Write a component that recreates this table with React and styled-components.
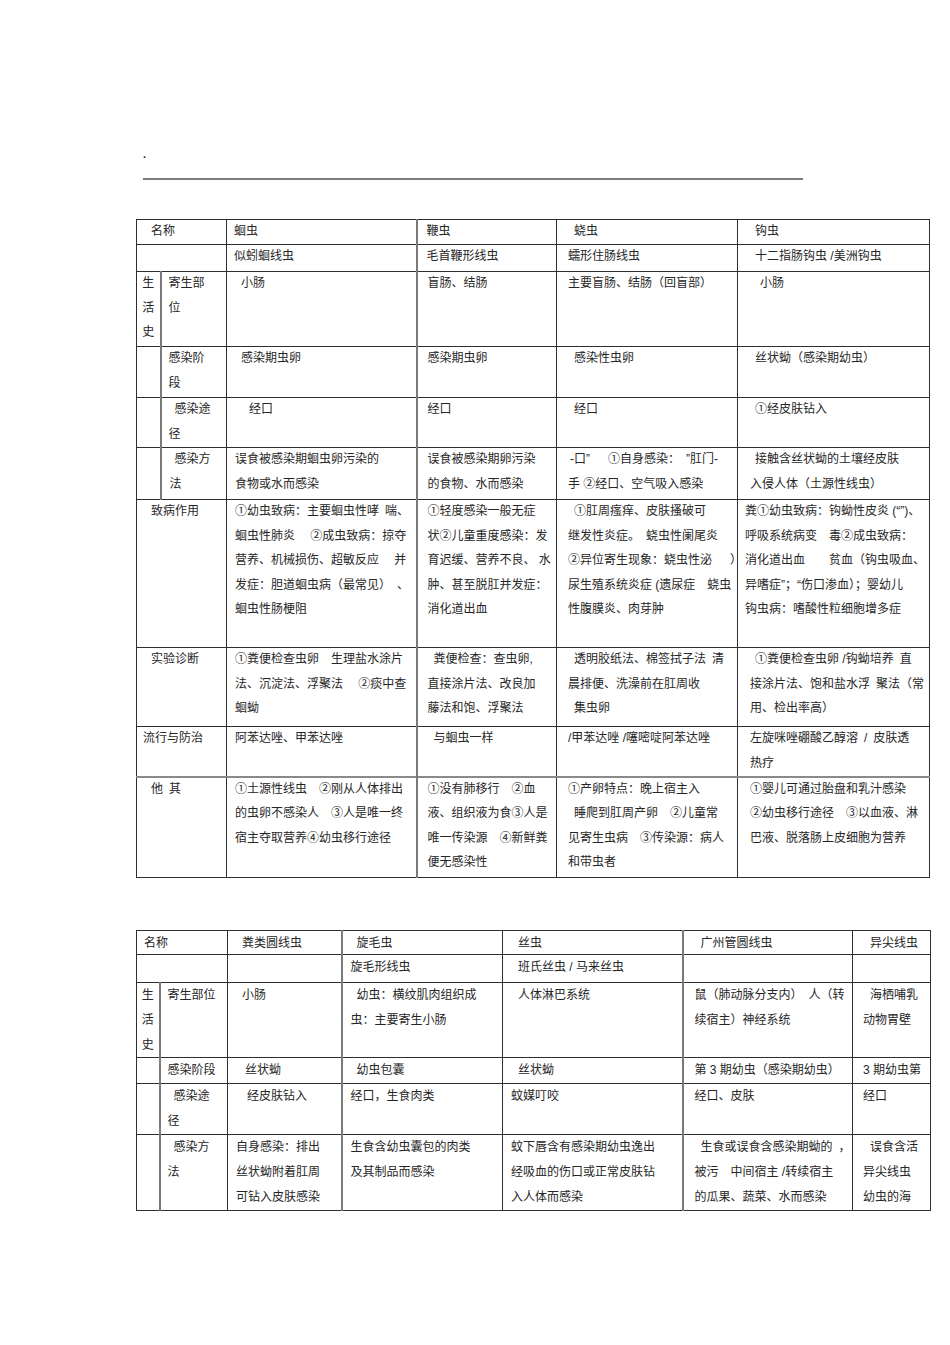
import React from 'react';
import styled, { createGlobalStyle, css } from 'styled-components';

const GlobalStyle = createGlobalStyle`
  html, body { margin: 0; padding: 0; background: #ffffff; }
  body {
    font-family: "Liberation Sans", "Noto Sans CJK SC", sans-serif;
    color: #262626;
  }
`;

const Page = styled.div`
  width: 950px;
  min-height: 1345px;
  box-sizing: border-box;
  padding: 148px 0 40px 136px;
`;

const DotMark = styled.div`
  margin-left: 7px;
  height: 12px;
  font-size: 11px;
  font-weight: 700;
  line-height: 12px;
  color: #222;
`;

const Rule = styled.div`
  margin: 18px 0 0 7px;
  width: 660px;
  height: 2px;
  background: #7d7d7d;
`;

const Sheet = styled.table`
  border-collapse: collapse;
  table-layout: fixed;
  width: ${p => p.$w}px;
  margin-top: ${p => p.$mt}px;
  font-size: 12px;
`;

const Col = styled.col`
  width: ${p => p.$w}px;
`;

const Row = styled.tr`
  height: ${p => p.$h}px;
`;

const Cell = styled.td`
  border: 1px solid #2e2e2e;
  ${p => p.$heavyLeft && css`border-left: 2px solid #7a7a7a;`}
  ${p => p.$heavyTop && css`border-top: 2px solid #8a8a8a;`}
  padding: 0;
  vertical-align: top;
  overflow: visible;
  text-align: ${p => (p.$center ? 'center' : 'left')};
`;

const Stack = styled.div`
  margin-top: ${p => p.$off}px;
  margin-bottom: -14px;
`;

const Line = styled.div`
  height: ${p => p.$lh}px;
  line-height: ${p => p.$lh}px;
  padding-left: ${p => p.$i}px;
  white-space: pre;
`;

const LIFE = [['生', 0], ['活', 0], ['史', 0]];

const T1 = {
  cols: [24, 66, 190, 140, 181, 192],
  heavy: [1, 3],
  lh: 24.6,
  off: -1,
  rows: [
    { h: 25, cells: [
      { span: 2, l: [['名称', 14]] },
      { l: [['蛔虫', 7]] },
      { l: [['鞭虫', 9]] },
      { l: [['蛲虫', 17]] },
      { l: [['钩虫', 17]] },
    ] },
    { h: 27, cells: [
      { span: 2, l: [] },
      { l: [['似蚓蛔线虫', 7]] },
      { l: [['毛首鞭形线虫', 9]] },
      { l: [['蠕形住肠线虫', 11]] },
      { l: [['十二指肠钩虫 /美洲钩虫', 17]] },
    ] },
    { h: 75, cells: [
      { l: LIFE, center: true },
      { l: [['寄生部', 7], ['位', 7]] },
      { l: [['小肠', 14]] },
      { l: [['盲肠、结肠', 10]] },
      { l: [['主要盲肠、结肠（回盲部）', 11]] },
      { l: [['小肠', 22]] },
    ] },
    { h: 51, cells: [
      { l: [] },
      { l: [['感染阶', 7], ['段', 7]] },
      { l: [['感染期虫卵', 14]] },
      { l: [['感染期虫卵', 10]] },
      { l: [['感染性虫卵', 17]] },
      { l: [['丝状蚴（感染期幼虫）', 17]] },
    ] },
    { h: 50, cells: [
      { l: [] },
      { l: [['感染途', 13], ['径', 7]] },
      { l: [['经口', 22]] },
      { l: [['经口', 10]] },
      { l: [['经口', 17]] },
      { l: [['①经皮肤钻入', 17]] },
    ] },
    { h: 52, cells: [
      { l: [] },
      { l: [['感染方', 13], ['法', 8]] },
      { l: [['误食被感染期蛔虫卵污染的', 8], ['食物或水而感染', 8]] },
      { l: [['误食被感染期卵污染', 10], ['的食物、水而感染', 10]] },
      { l: [['-口”\u3000\u2002①自身感染：\u2002”肛门-', 13], ['手 ②经口、空气吸入感染', 11]] },
      { l: [['接触含丝状蚴的土壤经皮肤', 17], ['入侵人体（土源性线虫）', 12]] },
    ] },
    { h: 148, cells: [
      { span: 2, l: [['致病作用', 14]] },
      { l: [
        ['①幼虫致病：主要蛔虫性哮\u2002喘、', 8],
        ['蛔虫性肺炎\u3000 ②成虫致病：掠夺', 8],
        ['营养、机械损伤、超敏反应\u3000 并', 8],
        ['发症：胆道蛔虫病（最常见）\u2002、', 8],
        ['蛔虫性肠梗阻', 8],
      ] },
      { l: [
        ['①轻度感染一般无症', 10],
        ['状②儿童重度感染：发', 10],
        ['育迟缓、营养不良、 水', 10],
        ['肿、甚至脱肛并发症：', 10],
        ['消化道出血', 10],
      ] },
      { l: [
        ['①肛周瘙痒、皮肤搔破可', 17],
        ['继发性炎症。\u3000蛲虫性阑尾炎', 11],
        ['②异位寄生现象：蛲虫性泌\u3000\u2002）', 11],
        ['尿生殖系统炎症 (遗尿症\u3000蛲虫', 11],
        ['性腹膜炎、肉芽肿', 11],
      ] },
      { l: [
        ['粪①幼虫致病：钩蚴性皮炎 (“”)、', 7],
        ['呼吸系统病变\u3000毒②成虫致病：', 7],
        ['消化道出血\u3000\u3000贫血（钩虫吸血、', 7],
        ['异嗜症”；“伤口渗血）；婴幼儿', 7],
        ['钩虫病：嗜酸性粒细胞增多症', 7],
      ] },
    ] },
    { h: 79, cells: [
      { span: 2, l: [['实验诊断', 14]] },
      { l: [
        ['①粪便检查虫卵\u3000生理盐水涂片', 8],
        ['法、沉淀法、浮聚法\u3000 ②痰中查', 8],
        ['蛔蚴', 8],
      ] },
      { l: [
        ['粪便检查：查虫卵,', 16],
        ['直接涂片法、改良加', 10],
        ['藤法和饱、浮聚法', 10],
      ] },
      { l: [
        ['透明胶纸法、棉签拭子法\u2002清', 17],
        ['晨排便、洗澡前在肛周收', 11],
        ['集虫卵', 17],
      ] },
      { l: [
        ['①粪便检查虫卵 /钩蚴培养\u2002直', 17],
        ['接涂片法、饱和盐水浮\u2002聚法（常', 12],
        ['用、检出率高）', 12],
      ] },
    ] },
    { h: 50, cells: [
      { span: 2, l: [['流行与防治', 6]] },
      { l: [['阿苯达唑、甲苯达唑', 8]] },
      { l: [['与蛔虫一样', 16]] },
      { l: [['/甲苯达唑 /噻嘧啶阿苯达唑', 11]] },
      { l: [['左旋咪唑硼酸乙醇溶\u2002/\u2002皮肤透', 12], ['热疗', 12]] },
    ] },
    { h: 101, top: true, cells: [
      { span: 2, l: [['他\u2002其', 14]] },
      { l: [
        ['①土源性线虫\u3000②刚从人体排出', 8],
        ['的虫卵不感染人\u3000③人是唯一终', 8],
        ['宿主夺取营养④幼虫移行途径', 8],
      ] },
      { l: [
        ['①没有肺移行\u3000②血', 10],
        ['液、组织液为食③人是', 10],
        ['唯一传染源\u3000④新鲜粪', 10],
        ['便无感染性', 10],
      ] },
      { l: [
        ['①产卵特点：晚上宿主入', 11],
        ['睡爬到肛周产卵\u3000②儿童常', 17],
        ['见寄生虫病\u3000③传染源：病人', 11],
        ['和带虫者', 11],
      ] },
      { l: [
        ['①婴儿可通过胎盘和乳汁感染', 12],
        ['②幼虫移行途径\u3000③以血液、淋', 12],
        ['巴液、脱落肠上皮细胞为营养', 12],
      ] },
    ] },
  ],
};

const T2 = {
  cols: [23, 68, 114, 161, 180, 170, 78],
  heavy: [1, 3, 5],
  lh: 24.8,
  off: 0,
  rows: [
    { h: 24, cells: [
      { span: 2, l: [['名称', 7]] },
      { l: [['粪类圆线虫', 14]] },
      { l: [['旋毛虫', 14]] },
      { l: [['丝虫', 15]] },
      { l: [['广州管圆线虫', 17]] },
      { l: [['异尖线虫', 17]] },
    ] },
    { h: 28, cells: [
      { span: 2, l: [] },
      { l: [] },
      { l: [['旋毛形线虫', 8]] },
      { l: [['班氏丝虫 / 马来丝虫', 15]] },
      { l: [] },
      { l: [] },
    ] },
    { h: 75, cells: [
      { l: LIFE, center: true },
      { l: [['寄生部位', 7]] },
      { l: [['小肠', 14]] },
      { l: [['幼虫：横纹肌肉组织成', 14], ['虫：主要寄生小肠', 8]] },
      { l: [['人体淋巴系统', 15]] },
      { l: [['鼠（肺动脉分支内）\u3000人（转', 11], ['续宿主）神经系统', 11]] },
      { l: [['海栖哺乳', 17], ['动物胃壁', 10]] },
    ] },
    { h: 26, cells: [
      { l: [] },
      { l: [['感染阶段', 7]] },
      { l: [['丝状蚴', 17]] },
      { l: [['幼虫包囊', 14]] },
      { l: [['丝状蚴', 15]] },
      { l: [['第 3 期幼虫（感染期幼虫）', 11]] },
      { l: [['3 期幼虫第', 10]] },
    ] },
    { h: 51, cells: [
      { l: [] },
      { l: [['感染途', 13], ['径', 7]] },
      { l: [['经皮肤钻入', 19]] },
      { l: [['经口，生食肉类', 8]] },
      { l: [['蚊媒叮咬', 8]] },
      { l: [['经口、皮肤', 11]] },
      { l: [['经口', 10]] },
    ] },
    { h: 76, cells: [
      { l: [] },
      { l: [['感染方', 13], ['法', 7]] },
      { l: [['自身感染：排出', 8], ['丝状蚴附着肛周', 8], ['可钻入皮肤感染', 8]] },
      { l: [['生食含幼虫囊包的肉类', 8], ['及其制品而感染', 8]] },
      { l: [['蚊下唇含有感染期幼虫逸出', 8], ['经吸血的伤口或正常皮肤钻', 8], ['入人体而感染', 8]] },
      { l: [['生食或误食含感染期蚴的\u2002，', 17], ['被污\u3000中间宿主 /转续宿主', 11], ['的瓜果、蔬菜、水而感染', 11]] },
      { l: [['误食含活', 17], ['异尖线虫', 10], ['幼虫的海', 10]] },
    ] },
  ],
};

function ParasiteTable({ data, mt }) {
  const width = data.cols.reduce((a, b) => a + b, 0);
  return (
    <Sheet $w={width} $mt={mt}>
      <colgroup>
        {data.cols.map((w, i) => (
          <Col key={i} $w={w} />
        ))}
      </colgroup>
      <tbody>
        {data.rows.map((row, ri) => {
          let col = 0;
          return (
            <Row key={ri} $h={row.h}>
              {row.cells.map((cell, ci) => {
                const start = col;
                const span = cell.span || 1;
                col += span;
                return (
                  <Cell
                    key={ci}
                    colSpan={span}
                    $center={cell.center}
                    $heavyLeft={data.heavy.includes(start)}
                    $heavyTop={row.top}
                  >
                    <Stack $off={data.off}>
                      {cell.l.map(([text, indent], li) => (
                        <Line key={li} $lh={data.lh} $i={indent}>
                          {text}
                        </Line>
                      ))}
                    </Stack>
                  </Cell>
                );
              })}
            </Row>
          );
        })}
      </tbody>
    </Sheet>
  );
}

export default function App() {
  return (
    <>
      <GlobalStyle />
      <Page>
        <DotMark>.</DotMark>
        <Rule />
        <ParasiteTable data={T1} mt={39} />
        <ParasiteTable data={T2} mt={52} />
      </Page>
    </>
  );
}
